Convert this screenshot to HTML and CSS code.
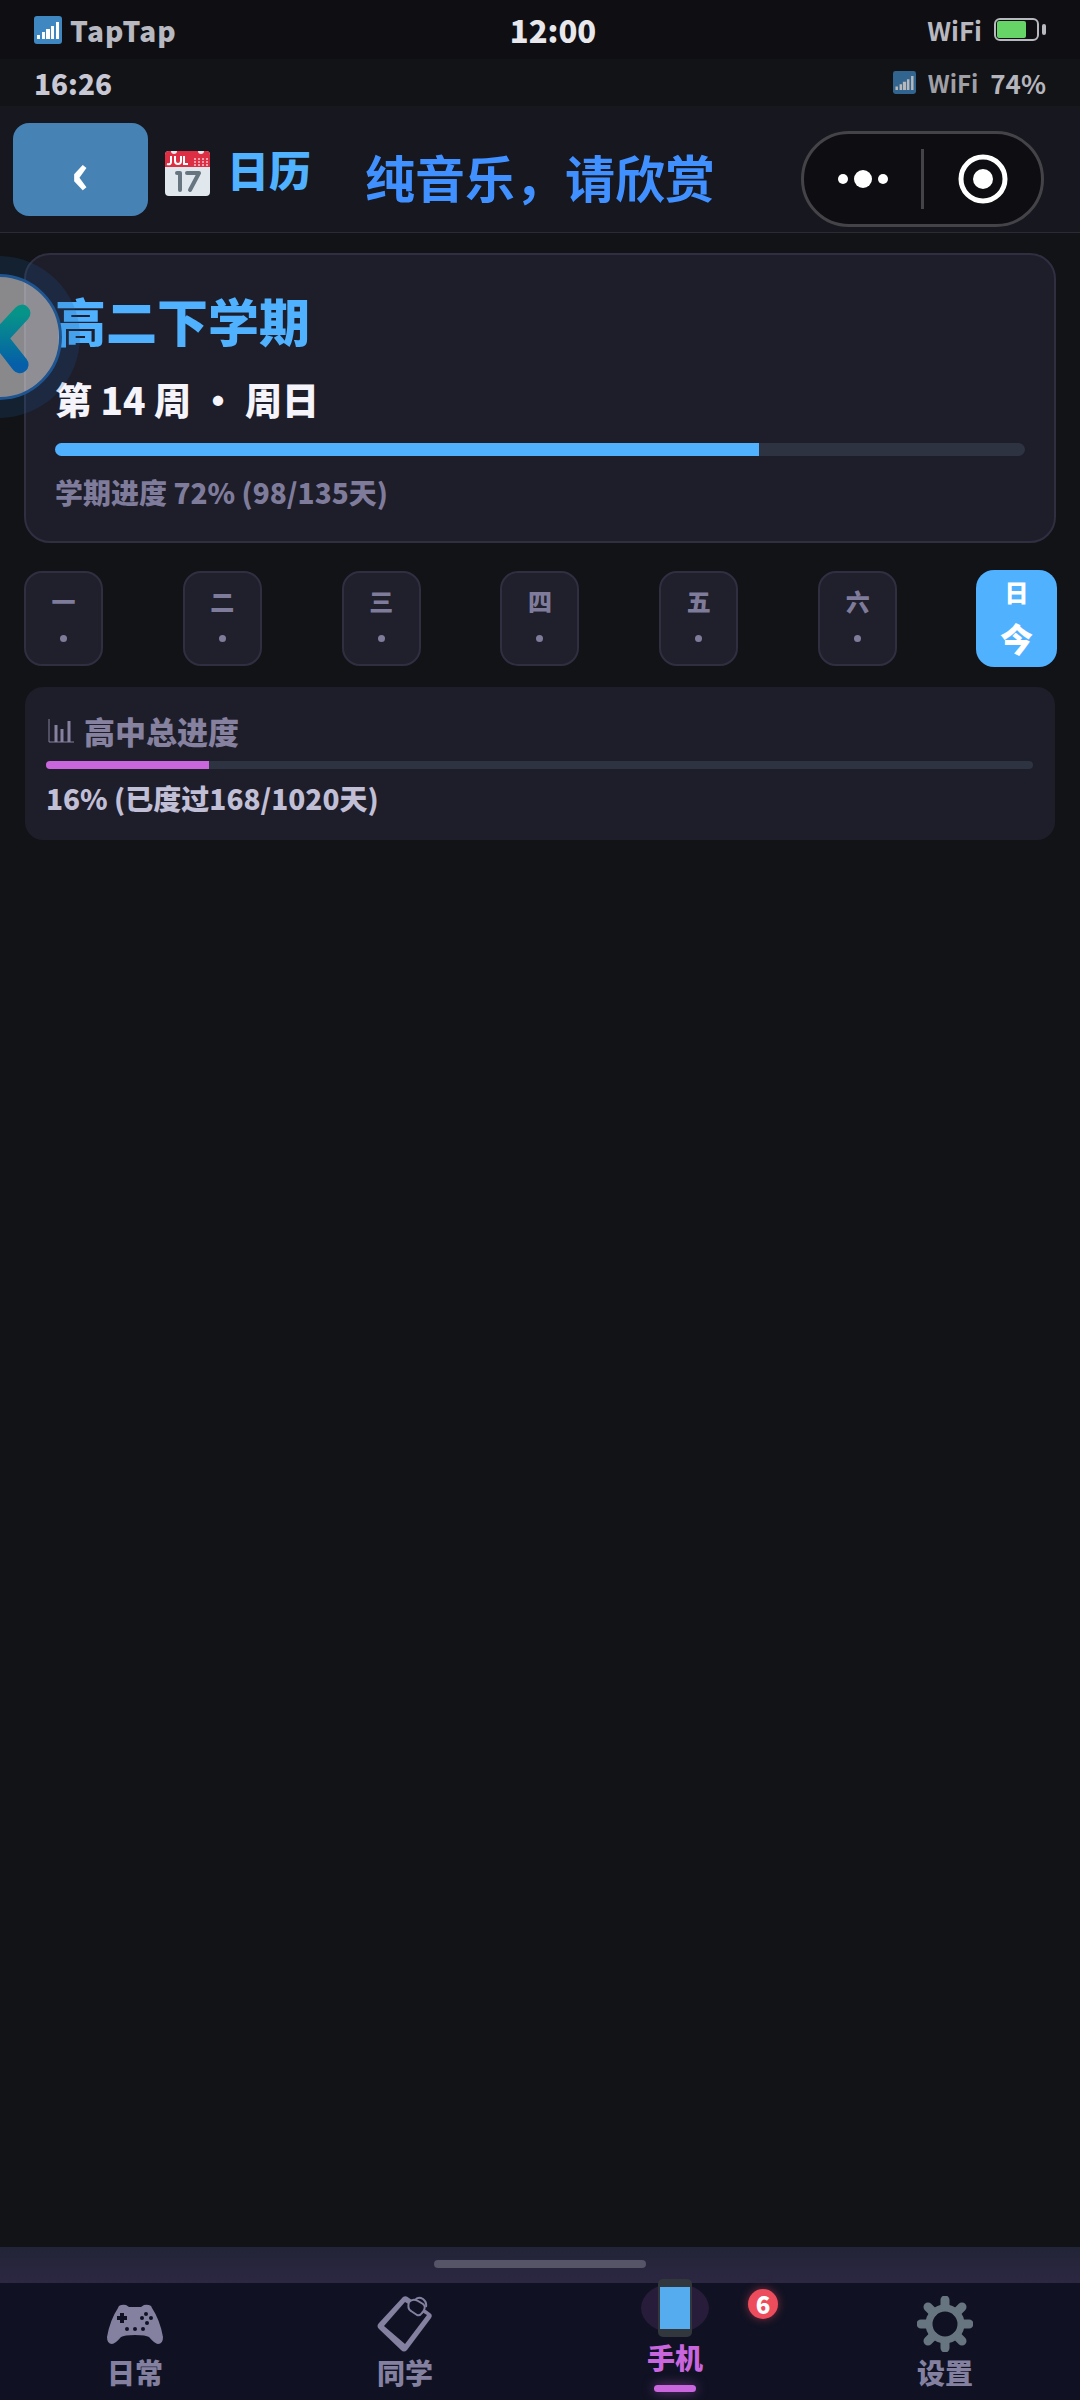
FILE: index.html
```html
<!DOCTYPE html>
<html lang="zh-CN">
<head>
<meta charset="utf-8">
<meta name="viewport" content="width=device-width, initial-scale=1">
<title>日历</title>
<link rel="stylesheet" href="styles.css">
</head>
<body>
<svg class="defs" aria-hidden="true">
  <symbol id="signal" viewBox="0 0 28 28">
    <rect width="28" height="28" rx="3" fill="#3f87c1"/>
    <path fill="#fff" d="M3 19h3v4H3zM8 16h3v7H8zM12 13h4v10h-4zM17 10h3v13h-3zM22 6h3v17h-3z"/>
  </symbol>
</svg>
<div class="app">
  <header>
    <div class="system-bar">
      <span class="carrier"><svg class="signal"><use href="#signal"/></svg>TapTap</span>
      <time class="clock">12:00</time>
      <span class="system-right">WiFi
        <svg class="battery" viewBox="0 0 52 24"><rect x="1" y="1" width="43" height="21" rx="5" fill="none" stroke="#b8b8c0" stroke-width="2"/><rect x="3" y="3" width="29" height="17" rx="2" fill="#66d466"/><rect x="48" y="6" width="4" height="11" rx="2" fill="#b8b8c0"/></svg>
      </span>
    </div>
    <div class="phone-bar">
      <time>16:26</time>
      <span class="phone-right"><svg class="signal signal-small"><use href="#signal"/></svg><span class="wifi">WiFi</span><span>74%</span></span>
    </div>
    <div class="title-bar">
      <button class="back" aria-label="返回">‹</button>
      <h1 class="title">
        <svg class="calendar" viewBox="0 0 45 45"><rect width="45" height="45" rx="4" fill="#e1e8ed"/><path d="M0 4a4 4 0 0 1 4-4h2a3 3 0 0 0 6 0h21a3 3 0 0 0 6 0h2a4 4 0 0 1 4 4v12H0z" fill="#dd2e44"/><path d="M6 5v6q0 3-4 2M10 5v5q0 3 3 3t3-3V5M19 5v8h4" fill="none" stroke="#fff" stroke-width="2"/><path d="M29 8h14M29 11h14M29 14h14" stroke="#f4a0ac" stroke-width="2" stroke-dasharray="2"/><path d="M12 22h3v17M22 22h12L25 39" fill="none" stroke="#66757f" stroke-width="4" stroke-linecap="round" stroke-linejoin="round"/></svg>
        日历
      </h1>
      <p class="lyric">纯音乐，请欣赏</p>
      <div class="capsule">
        <button aria-label="更多"><svg viewBox="0 0 50 54" width="50" height="54" fill="#fff"><circle cx="5" cy="27" r="5"/><circle cx="25" cy="27" r="9"/><circle cx="45" cy="27" r="5"/></svg></button>
        <span class="divider"></span>
        <button aria-label="关闭"><svg viewBox="0 0 50 50" width="50" height="50"><circle cx="25" cy="25" r="22" fill="none" stroke="#fff" stroke-width="5"/><circle cx="25" cy="25" r="10" fill="#fff"/></svg></button>
      </div>
    </div>
  </header>

  <main class="content">
    <section class="term">
      <h2>高二下学期</h2>
      <p class="week">第 14 周 • 周日</p>
      <div class="bar"><div class="fill" style="width:72.6%"></div></div>
      <p class="note">学期进度 72% (98/135天)</p>
    </section>
    <ul class="days">
      <li><span>一</span><i></i></li>
      <li><span>二</span><i></i></li>
      <li><span>三</span><i></i></li>
      <li><span>四</span><i></i></li>
      <li><span>五</span><i></i></li>
      <li><span>六</span><i></i></li>
      <li class="today"><span>日</span><b>今</b></li>
    </ul>
    <section class="total">
      <h3><svg class="chart" viewBox="0 0 26 24" fill="none" stroke="#85819f"><path d="M1 0v23h25"/><path d="M8 6v17M14 10v13M21 2v21" stroke-width="3"/></svg>高中总进度</h3>
      <div class="bar bar-thin"><div class="fill fill-pink" style="width:16.5%"></div></div>
      <p>16% (已度过168/1020天)</p>
    </section>
  </main>

  <div class="handle"><span></span></div>
  <nav class="tabs">
    <a href="#daily"><svg class="icon" viewBox="0 0 56 56"><path fill="#8481a0" d="M11 12q1-4 8-3l3 2h12l3-2q7-1 8 3 8 12 11 29 0 7-5 7-3 0-9-7-3-2-14-2t-14 2q-6 7-9 7-5 0-5-7Q3 24 11 12z"/><path d="M15 17v10M10 22h10" stroke="#101223" stroke-width="4"/><g fill="#101223"><circle cx="39" cy="18" r="2"/><circle cx="35" cy="22" r="2"/><circle cx="44" cy="22" r="2"/><circle cx="40" cy="27" r="2"/><circle cx="20" cy="33" r="2"/><circle cx="28" cy="33" r="2"/><circle cx="36" cy="33" r="2"/></g></svg>日常</a>
    <a href="#classmates"><svg class="icon" viewBox="0 0 56 56" fill="none" stroke="#8481a0" stroke-linejoin="round"><path fill="#8481a0" fill-rule="evenodd" stroke="none" d="M26 1q3-2 6 1l21 15q3 2 1 5L30 54q-3 3-6 0L2 33q-3-3 0-6zM28 6 7 30l21 18L50 19z"/><path d="M32 6q-2 7 2 9l6 4q3 1 5-2 5-6 1-9l-5-3q-5-3-9 1z" fill="#101223" stroke-width="2"/><path d="M38 4q3-4 8-1 4 3 3 8" stroke-width="2"/></svg>同学</a>
    <a href="#phone" class="active"><span class="halo"><svg class="phone" viewBox="0 0 34 58"><rect width="34" height="58" rx="5" fill="#31373d"/><path d="M2 8h30v42H2z" fill="#55acee"/></svg></span>手机<em class="badge">6</em></a>
    <a href="#settings"><svg class="icon" viewBox="0 0 56 56"><g stroke="#66757f" fill="none"><circle cx="28" cy="28" r="16" stroke-width="7"/><path d="M28 4v6M28 46v6M4 28h6M46 28h6M11 11l5 5M40 40l5 5M11 45l5-5M40 16l5-5" stroke-width="9" stroke-linecap="round"/></g></svg>设置</a>
  </nav>
</div>
<button class="float" aria-label="展开"><svg viewBox="0 0 126 126"><defs><linearGradient id="teal" x2="0" y2="1"><stop offset="0" stop-color="#079488"/><stop offset="1" stop-color="#065fa8"/></linearGradient></defs><path d="M87 38 63 64l22 28" fill="none" stroke="url(#teal)" stroke-width="18" stroke-linecap="round" stroke-linejoin="round"/></svg></button>
</body>
</html>
```
FILE: styles.css
```css
* { box-sizing: border-box; margin: 0; padding: 0; }
body {
  background: #121317;
  color: #f5f4fa;
  font-family: "Noto Sans CJK SC", sans-serif;
  font-weight: 900;
  overflow-x: hidden;
}
h1, h2, h3 { font-weight: 900; }
button { border: 0; background: none; color: inherit; font: inherit; }
svg { display: block; flex: none; }
.defs { position: absolute; width: 0; height: 0; }
.app { display: flex; flex-direction: column; min-height: 100vh; }

.system-bar {
  display: grid;
  grid-template-columns: 1fr auto 1fr;
  align-items: center;
  height: 59px;
  padding: 0 34px;
  background: #0f0f13;
  color: #b8b8c0;
  font-size: 26px;
}
.carrier { display: flex; align-items: center; gap: 8px; font-size: 28px; letter-spacing: 1px; }
.signal { width: 28px; height: 28px; }
.clock { color: #e8e8ec; font-size: 31px; padding-left: 26px; }
.system-right { display: flex; align-items: center; justify-content: flex-end; gap: 12px; font-weight: 700; }
.battery { width: 52px; height: 24px; }

.phone-bar {
  display: flex;
  align-items: center;
  justify-content: space-between;
  height: 47px;
  padding: 0 34px;
  color: #c8c7d4;
  font-size: 28px;
}
.phone-right { display: flex; align-items: center; gap: 12px; color: #b5b5bd; font-size: 26px; font-weight: 700; }
.wifi { color: #9f9fa6; font-size: 24px; }
.signal-small { width: 23px; height: 23px; opacity: .7; }

.title-bar {
  display: flex;
  align-items: center;
  height: 127px;
  padding: 0 36px 0 13px;
  background: #16171f;
  border-bottom: 1px solid #2b2b37;
}
.back { width: 135px; height: 93px; border-radius: 16px; background: #4682b4; color: #fff; font-size: 56px; line-height: 93px; }
.title { display: flex; align-items: center; gap: 17px; margin-left: 17px; color: #50b1ff; font-size: 42px; line-height: 56px; }
.calendar { width: 45px; height: 45px; margin-top: 8px; }
.lyric { margin: 14px 0 0 54px; color: #4090ff; font-size: 50px; font-weight: 700; line-height: 64px; white-space: nowrap; }
.capsule { display: flex; align-items: center; width: 243px; height: 96px; margin: 20px 0 0 auto; border: 3px solid #444448; border-radius: 48px; background: #0d0d12; }
.capsule button { display: flex; flex: 1; align-items: center; justify-content: center; height: 100%; }
.divider { width: 3px; height: 60px; background: #444448; }

.content { flex: 1; padding: 20px 24px; }
.term { padding: 30px 29px; border: 2px solid #302f41; border-radius: 26px; background: #1e1d2a; }
.term h2 { color: #50b1ff; font-size: 51px; line-height: 70px; }
.week { margin-top: 16px; font-size: 37px; line-height: 56px; }
.bar { height: 13px; margin-top: 16px; overflow: hidden; border-radius: 7px; background: #2d3340; }
.fill { height: 100%; background: #50b1ff; }
.note { margin-top: 17px; color: #7f7c9b; font-size: 28px; line-height: 38px; }

.days { display: flex; justify-content: space-between; margin-top: 28px; list-style: none; font-size: 24px; }
.days li { display: flex; flex-direction: column; align-items: center; gap: 18px; width: 79px; height: 95px; padding-top: 12px; border: 2px solid #302f41; border-radius: 18px; background: #201f2c; color: #7f7c9b; line-height: 32px; }
.days i { width: 7px; height: 7px; border-radius: 50%; background: #7f7c9b; }
.days .today { gap: 6px; width: 81px; height: 97px; margin: -1px; padding-top: 6px; border: 0; background: #50b1ff; color: #fff; }
.days b { font-size: 33px; line-height: 48px; }

.total { margin: 21px 1px 0; padding: 20px 22px 22px 21px; border-radius: 18px; background: #1e1d2a; color: #c1bfd6; font-size: 28px; line-height: 40px; }
.total h3 { display: flex; align-items: center; gap: 10px; padding-left: 2px; color: #85819f; font-size: 31px; line-height: 48px; }
.total p { margin-top: 9px; }
.chart { width: 26px; height: 24px; }
.bar-thin { height: 8px; margin-top: 6px; border-radius: 4px; }
.fill-pink { background: #c966dd; }

.handle { display: flex; justify-content: center; height: 36px; padding-top: 13px; background: linear-gradient(#222437, #2c2742); }
.handle span { width: 212px; height: 8px; border-radius: 4px; background: #565467; }
.tabs { display: grid; grid-template-columns: repeat(4, 1fr); height: 117px; background: #101223; }
.tabs a { position: relative; display: flex; flex-direction: column; align-items: center; padding-top: 13px; color: #8481a0; font-size: 28px; line-height: 36px; text-decoration: none; }
.icon { width: 56px; height: 56px; margin-bottom: 2px; }
.tabs .active { padding-top: 0; color: #c966dd; }
.halo { display: flex; align-items: center; justify-content: center; width: 68px; height: 50px; margin-bottom: 6px; border-radius: 50%; background: #281c3b; }
.phone { width: 34px; height: 58px; }
.active::after { content: ""; width: 42px; height: 7px; margin-top: 10px; border-radius: 4px; background: #c966dd; box-shadow: 0 0 12px #c966dd80; }
.badge { position: absolute; top: 6px; left: 208px; width: 30px; height: 30px; border-radius: 50%; background: #ed4c5c; box-shadow: 0 0 8px #ed4c5c80; color: #fff; font-size: 24px; font-style: normal; line-height: 30px; text-align: center; }

.float { position: absolute; top: 274px; left: -64px; width: 126px; height: 126px; border: 3px solid #1e5490; border-radius: 50%; background: #ffffff80; box-shadow: 0 0 0 18px #1b60a030; }
.float svg { width: 120px; height: 120px; }
```
